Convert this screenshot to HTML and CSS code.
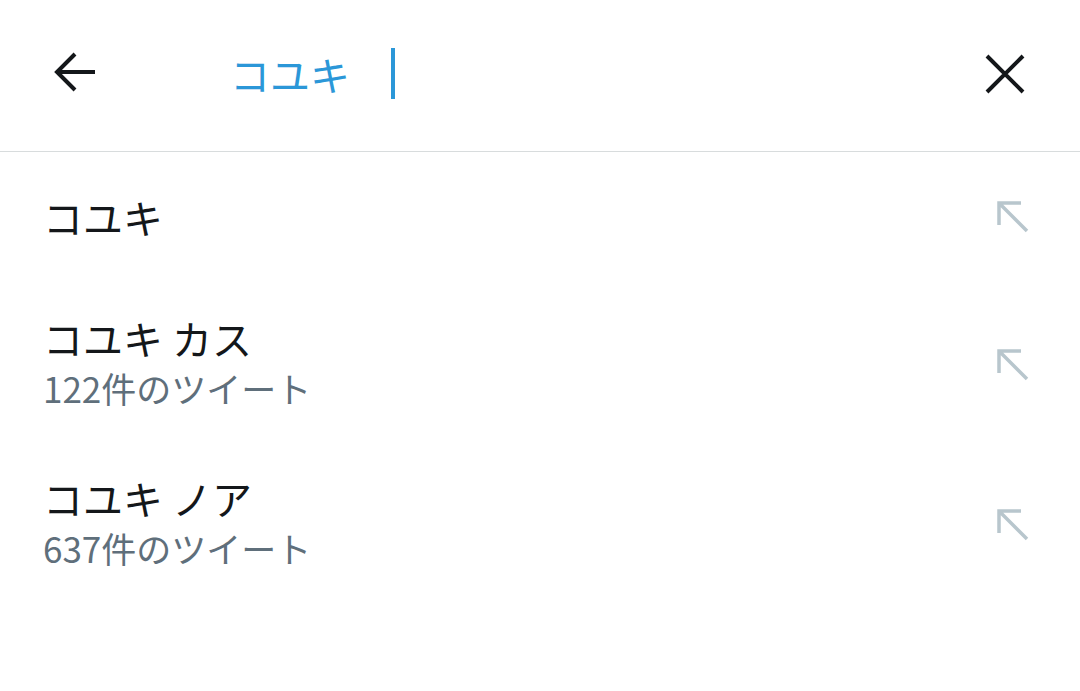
FILE: index.html
```html
<!DOCTYPE html>
<html lang="ja">
<head>
<meta charset="utf-8">
<link rel="stylesheet" href="styles.css">
</head>
<body>
<header class="search-bar">
  <button class="icon-btn back" aria-label="戻る">
    <svg width="44" height="44" viewBox="0 0 44 44"><path d="M42 20H4M22 2L4 20l18 18" fill="none" stroke="#14171a" stroke-width="4" stroke-linecap="butt" stroke-linejoin="miter"/></svg>
  </button>
  <div class="query"><span class="query-text">コユキ</span><span class="cursor"></span></div>
  <button class="icon-btn close" aria-label="クリア">
    <svg width="40" height="40" viewBox="0 0 40 40"><path d="M2 2L38 38M38 2L2 38" fill="none" stroke="#14171a" stroke-width="4"/></svg>
  </button>
</header>
<ul class="suggestions">
  <li class="item single">
    <div class="texts"><div class="title">コユキ</div></div>
    <svg class="fill-icon" width="32" height="32" viewBox="0 0 32 32"><path d="M2 24V2h22M2 2l28 28" fill="none" stroke="#b8c6cd" stroke-width="3.5"/></svg>
  </li>
  <li class="item">
    <div class="texts"><div class="title">コユキ カス</div><div class="sub">122件のツイート</div></div>
    <svg class="fill-icon" width="32" height="32" viewBox="0 0 32 32"><path d="M2 24V2h22M2 2l28 28" fill="none" stroke="#b8c6cd" stroke-width="3.5"/></svg>
  </li>
  <li class="item">
    <div class="texts"><div class="title">コユキ ノア</div><div class="sub">637件のツイート</div></div>
    <svg class="fill-icon" width="32" height="32" viewBox="0 0 32 32"><path d="M2 24V2h22M2 2l28 28" fill="none" stroke="#b8c6cd" stroke-width="3.5"/></svg>
  </li>
</ul>
</body>
</html>
```
FILE: styles.css
```css
* { box-sizing: border-box; }
html, body { margin: 0; padding: 0; background: #ffffff; }
body {
  font-family: "Noto Sans CJK JP", "Noto Sans", sans-serif;
  color: #14171a;
  width: 1080px;
  height: 691px;
  overflow: hidden;
}
.search-bar {
  height: 152px;
  border-bottom: 1px solid #d8dcdd;
  display: flex;
  align-items: center;
  padding: 0 53px 0 53px;
}
.icon-btn {
  border: 0;
  background: none;
  padding: 0;
  display: flex;
  align-items: center;
  justify-content: center;
}
.back { width: 44px; height: 44px; margin-top: -4px; }
.query {
  flex: 1;
  display: flex;
  align-items: center;
  padding-left: 133px;
  margin-top: -4px;
}
.query-text {
  font-size: 40px;
  line-height: 52px;
  color: #2b97d8;
}
.cursor {
  display: inline-block;
  width: 4px;
  height: 51px;
  background: #2b97d8;
  margin-left: 41px;
}
.close { width: 40px; height: 40px; margin-right: 2px; margin-top: -4px; }
.suggestions { list-style: none; margin: 0; padding: 0; }
.item {
  display: flex;
  align-items: center;
  justify-content: space-between;
  padding: 29px 51px 21px 43px;
  height: 160px;
}
.item .fill-icon { margin-top: 8px; }
.item.single { height: 125px; padding-top: 35px; padding-bottom: 30px; }
.item.single .fill-icon { margin-top: 0; }
.texts { display: flex; flex-direction: column; }
.title {
  font-size: 40px;
  line-height: 48px;
  color: #14171a;
}
.single .title { line-height: 54px; }
.sub {
  font-size: 35px;
  line-height: 40px;
  margin-top: 6px;
  color: #5f6f7b;
}
.fill-icon { flex: none; }
```
